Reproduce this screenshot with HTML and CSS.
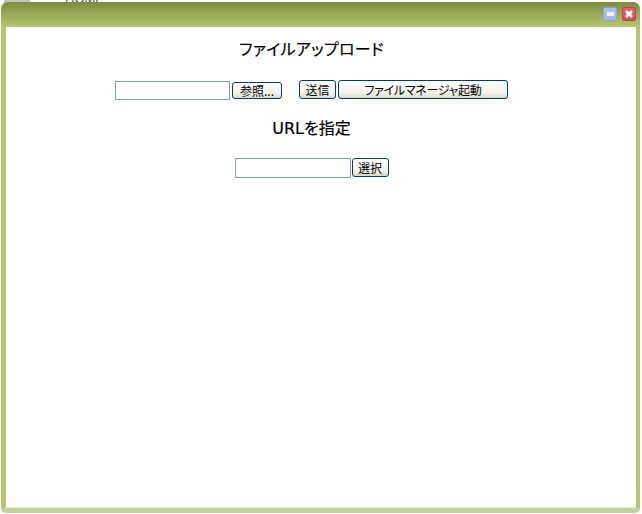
FILE: index.html
```html
<!DOCTYPE html>
<html lang="ja">
<head>
    <meta charset="UTF-8">
    <title>ファイルアップロード</title>
    <link rel="stylesheet" href="styles.css">
</head>
<body>
<div class="backdrop">
    <span class="back-tab"></span>
    <span class="back-text">HOME</span>
</div>
<div class="window">
    <div class="titlebar">
        <span class="win-btn win-max"><span class="max-mark"></span></span>
        <span class="win-btn win-close">
            <svg width="10" height="10" viewBox="0 0 10 10"><path d="M2 2L8 8M8 2L2 8" stroke="#fff" stroke-width="2.6"/></svg>
        </span>
    </div>
    <div class="content">
        <h3 class="title first">ファイルアップロード</h3>
        <div class="row upload-row">
            <input class="text-input" type="text">
            <button class="btn browse">参照...</button>
            <button class="btn send">送信</button>
            <button class="btn manager">ファイルマネージャ起動</button>
        </div>
        <h3 class="title second">URLを指定</h3>
        <div class="row url-row">
            <input class="text-input url-input" type="text">
            <button class="btn choose">選択</button>
        </div>
    </div>
</div>
</body>
</html>
```

FILE: styles.css
```css
*{
    margin: 0;
    padding: 0;
    box-sizing: border-box;
}
html,body{
    height: 514px;
    overflow: hidden;
    background: #fff;
}
body{
    font-family: "Liberation Sans", "Noto Sans CJK JP", sans-serif;
    padding: 2px 1px 1px 1px;
}
.backdrop{
    position: absolute;
    left: 0;
    top: 0;
    width: 120px;
    height: 3px;
    overflow: hidden;
}
.back-tab{
    position: absolute;
    left: 4px;
    top: 0;
    width: 26px;
    height: 3px;
    background: #c4c4c4;
}
.back-text{
    position: absolute;
    left: 65px;
    top: -9px;
    font-size: 13px;
    color: #555;
}
.window{
    position: relative;
    width: 639px;
    height: 511px;
    display: flex;
    flex-direction: column;
    background: #b5c673;
    border-radius: 7px 7px 5px 5px;
    border-bottom: 5px solid #c3d09c;
    overflow: hidden;
}
.titlebar{
    height: 25px;
    flex: none;
    display: flex;
    justify-content: flex-end;
    gap: 5px;
    padding: 5px 4px 0 0;
    background: linear-gradient(#7b8c3f, #b6c871);
}
.win-btn{
    width: 14px;
    height: 14px;
    border-radius: 2px;
    display: flex;
    align-items: center;
    justify-content: center;
}
.win-max{
    background: linear-gradient(#b4c5ec, #a2b6e2);
    border: 1px solid #8ea3d4;
}
.max-mark{
    width: 7px;
    height: 4px;
    background: #eef2fb;
}
.win-close{
    background: linear-gradient(#e4626c, #d44c58);
    border: 1px solid #b8434c;
}
.content{
    flex: 1;
    margin: 0 4px 0 5px;
    padding-right: 19px;
    background: #fff;
    border-bottom: 1px solid #e8e9e0;
}
.title{
    font-family: "DejaVu Sans", "Noto Sans CJK JP", sans-serif;
    font-feature-settings: "palt";
    font-size: 16px;
    font-weight: normal;
    -webkit-text-stroke: 0.2px #000;
    line-height: 20px;
    text-align: center;
    color: #000;
}
.first{
    margin-top: 13px;
    letter-spacing: 0.3px;
}
.second{
    margin-top: 19px;
}
.row{
    display: flex;
    justify-content: center;
    align-items: flex-start;
}
.upload-row{
    margin-top: 20px;
}
.url-row{
    margin-top: 19px;
}
.text-input{
    width: 115px;
    height: 19px;
    border: 1px solid #7f9db9;
    background: #fff;
    margin-top: 1px;
}
.url-input{
    width: 116px;
    height: 20px;
    margin-top: 0;
}
.btn{
    height: 19px;
    border: 1px solid #003c74;
    border-radius: 3px;
    background: linear-gradient(#fff, #f2f1ea 70%, #dcd8ca);
    font-family: "Noto Sans CJK JP", sans-serif;
    font-feature-settings: "palt";
    font-size: 12px;
    line-height: 15px;
    color: #000;
}
.browse{
    width: 50px;
    height: 17px;
    margin: 2px 17px 0 2px;
}
.send{
    width: 37px;
}
.manager{
    width: 170px;
    margin-left: 2px;
    letter-spacing: -0.3px;
}
.choose{
    width: 37px;
    margin-left: 1px;
}
```
